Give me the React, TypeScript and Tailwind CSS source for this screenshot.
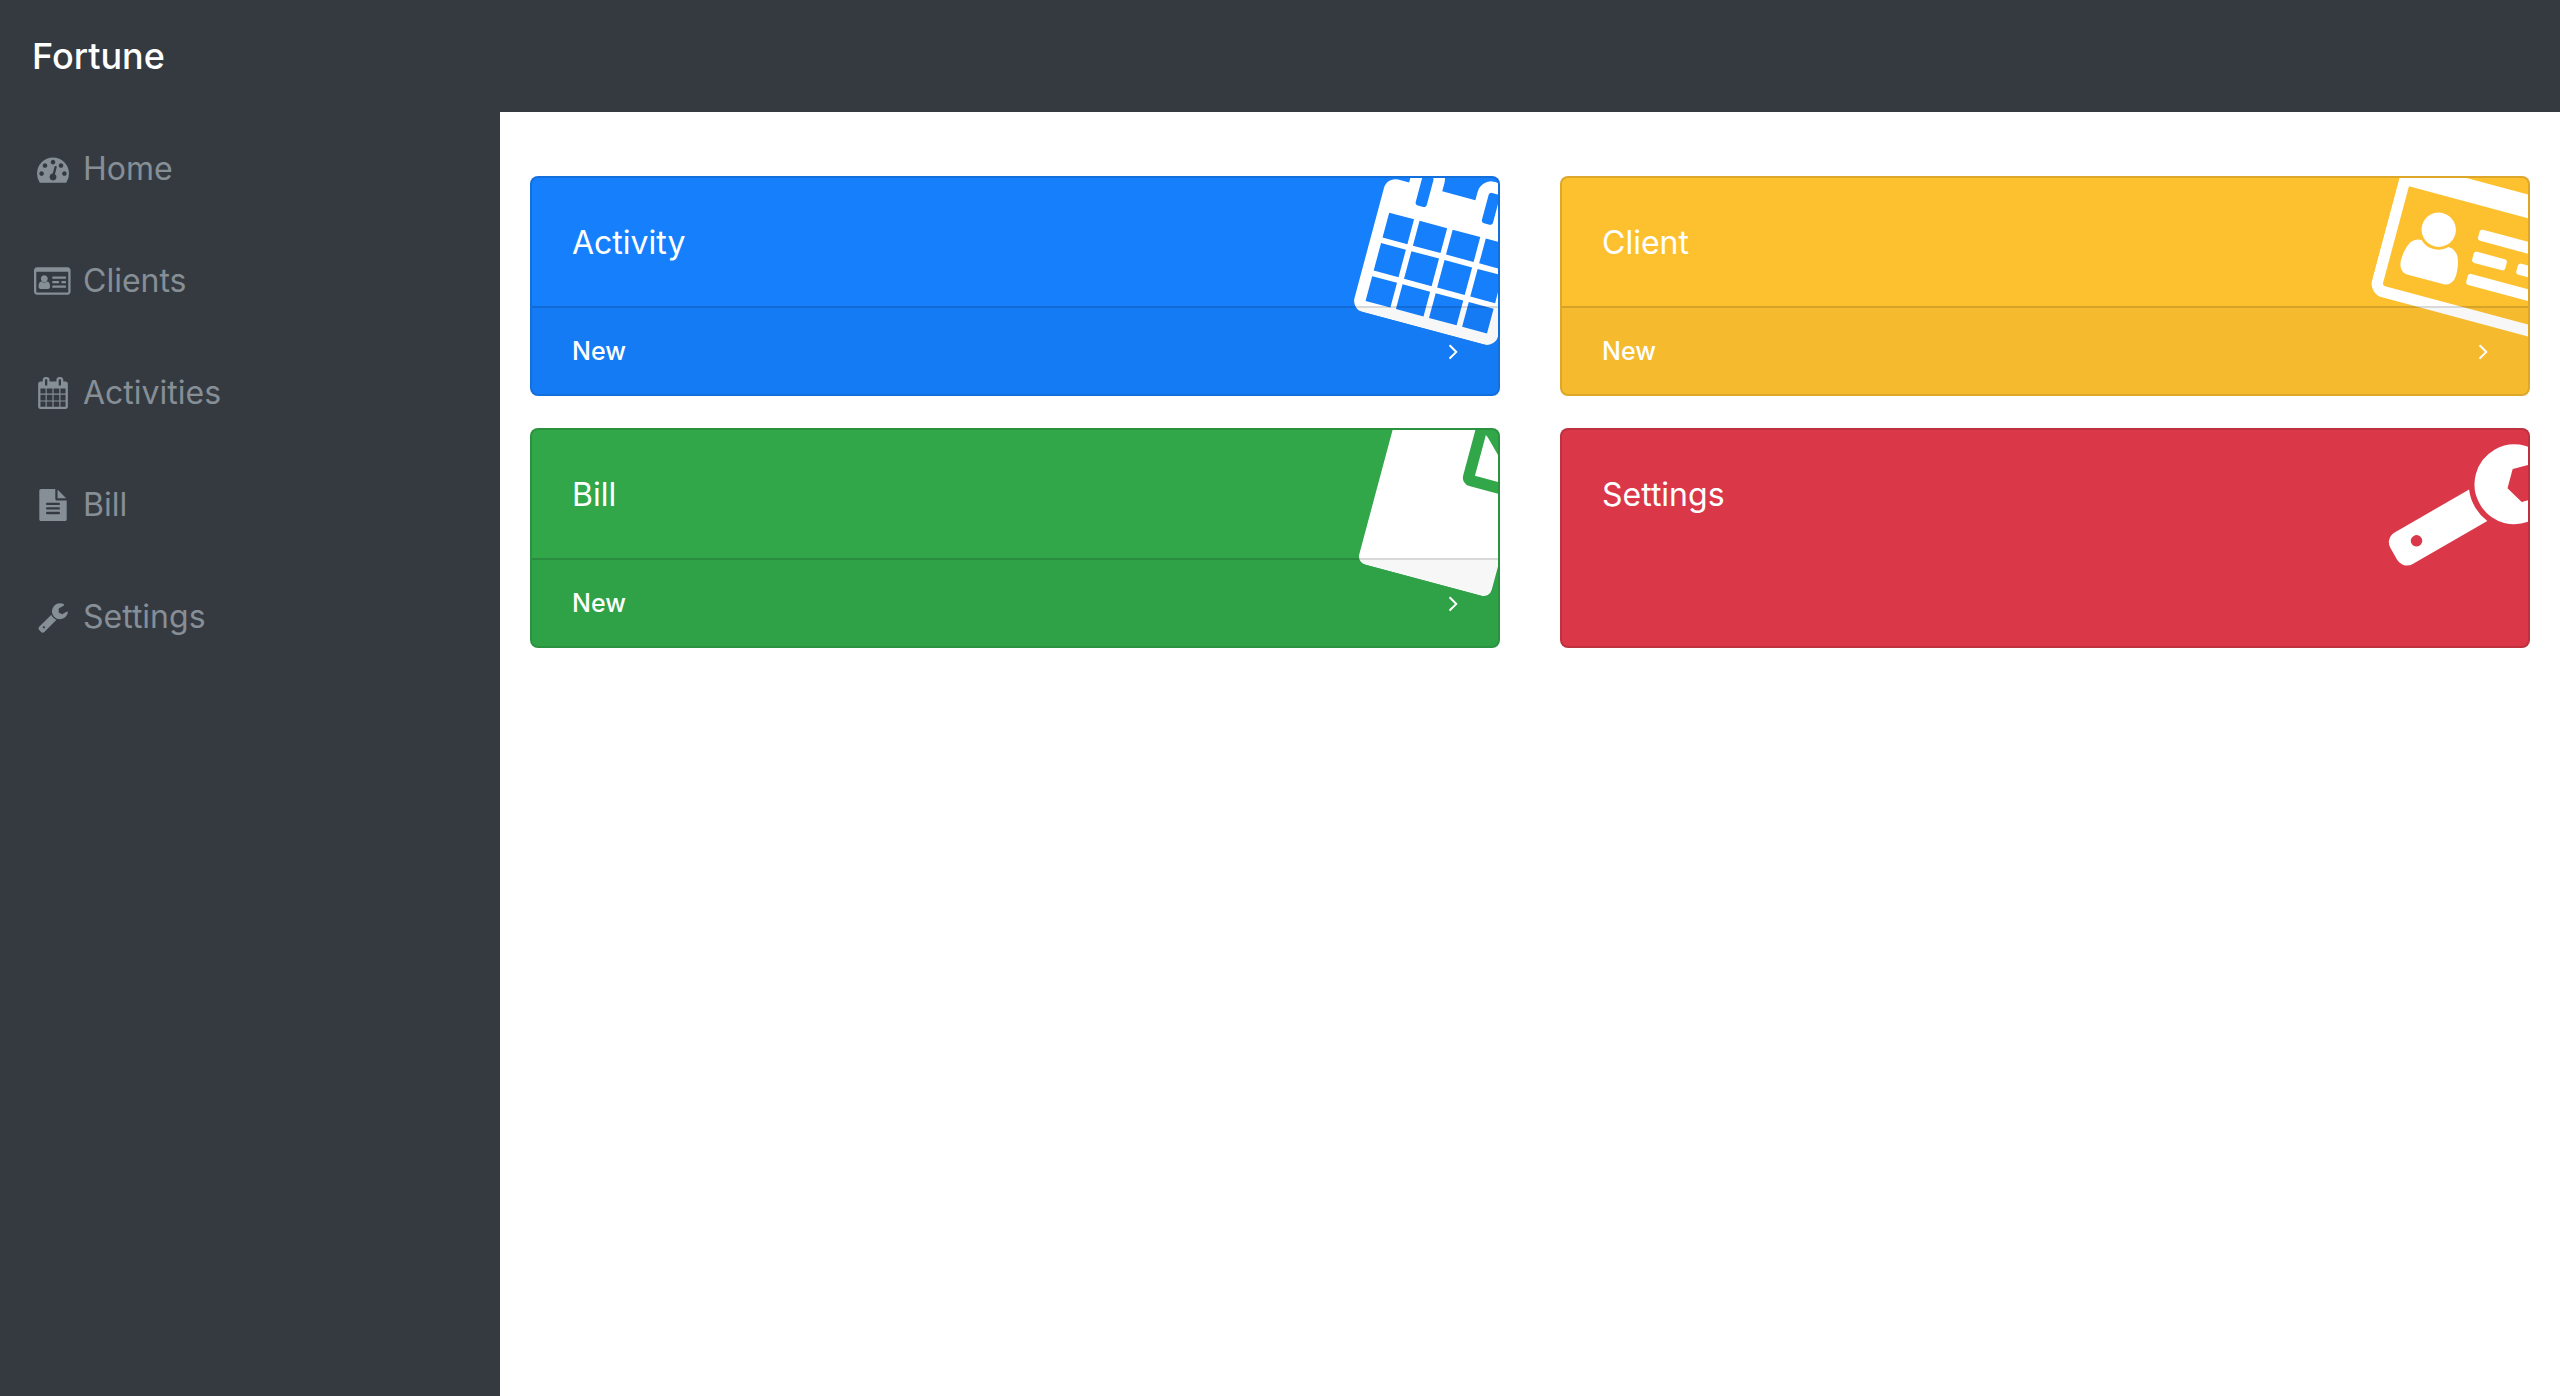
import type { ReactNode } from "react";

type IconProps = { className?: string };

function Glyph({ className, width = 1792, children }: IconProps & { width?: number; children: ReactNode }) {
  return (
    <svg className={className} viewBox={`0 0 ${width} 1792`} fill="currentColor" aria-hidden="true">
      {children}
    </svg>
  );
}

const GaugeIcon = ({ className }: IconProps) => (
  <Glyph className={className}>
    <path d="M384 1152q0-53-37.500-90.500t-90.500-37.500-90.500 37.500-37.500 90.500 37.500 90.500 90.500 37.500 90.500-37.500 37.500-90.500zm192-448q0-53-37.500-90.500t-90.500-37.500-90.500 37.500-37.500 90.500 37.500 90.500 90.500 37.500 90.500-37.500 37.500-90.500zm428 481l101-382q6-26-7.500-48.500t-38.500-29.500-48 6.500-30 39.500l-101 382q-60 5-107 43.500t-63 98.500q-20 77 20 146t117 89 146-20 89-117q16-60-6-117t-72-91zm660-33q0-53-37.500-90.500t-90.500-37.500-90.500 37.500-37.500 90.500 37.500 90.500 90.500 37.500 90.500-37.500 37.500-90.500zm-640-640q0-53-37.500-90.500t-90.500-37.500-90.500 37.500-37.500 90.500 37.500 90.500 90.500 37.500 90.500-37.500 37.500-90.500zm448 192q0-53-37.500-90.500t-90.500-37.500-90.500 37.500-37.500 90.500 37.500 90.500 90.500 37.500 90.500-37.500 37.500-90.500zm320 448q0 261-141 483-19 29-54 29h-1402q-35 0-54-29-141-221-141-483 0-182 71-348t191-286 286-191 348-71 348 71 286 191 191 286 71 348z" />
  </Glyph>
);

const IdCardIcon = ({ className }: IconProps) => (
  <Glyph className={className} width={2048}>
    <path
      transform="translate(0 1536) scale(1 -1)"
      d="M896 324q0 54 -7.5 100.5t-24.5 90t-51 68.500t-81 25q-64 -64 -156 -64t-156 64q-47 0 -81 -25t-51 -68.500t-24.500 -90t-7.500 -100.500q0 -55 31.500 -93.500t75.500 -38.500h426q44 0 75.500 38.500t31.500 93.500zM768 768q0 80 -56 136t-136 56t-136 -56t-56 -136t56 -136t136 -56t136 56t56 136zM1792 288v64q0 14 -9 23t-23 9h-704q-14 0 -23 -9t-9 -23v-64q0 -14 9 -23t23 -9h704q14 0 23 9t9 23zM1408 544v64q0 14 -9 23t-23 9h-320q-14 0 -23 -9t-9 -23v-64q0 -14 9 -23t23 -9h320q14 0 23 9t9 23zM1792 544v64q0 14 -9 23t-23 9h-192q-14 0 -23 -9t-9 -23v-64q0 -14 9 -23t23 -9h192q14 0 23 9t9 23zM1792 800v64q0 14 -9 23t-23 9h-704q-14 0 -23 -9t-9 -23v-64q0 -14 9 -23t23 -9h704q14 0 23 9t9 23z"
    />
    <path
      transform="translate(0 1536) scale(1 -1)"
      fillRule="evenodd"
      d="M1920 32v1120h-1792v-1120q0 -13 9.500 -22.500t22.500 -9.500h1728q13 0 22.500 9.500t9.500 22.500zM2048 1248v-1216q0 -66 -47 -113t-113 -47h-1728q-66 0 -113 47t-47 113v1216q0 66 47 113t113 47h1728q66 0 113 -47t47 -113z"
    />
  </Glyph>
);

const CalendarIcon = ({ className }: IconProps) => (
  <Glyph className={className}>
    <path d="M192 1664h288v-288h-288v288zm352 0h320v-288h-320v288zm-352-352h288v-320h-288v320zm352 0h320v-320h-320v320zm-352-384h288v-288h-288v288zm736 736h320v-288h-320v288zm-384-736h320v-288h-320v288zm768 736h288v-288h-288v288zm-384-352h320v-320h-320v320zm-352-864v-288q0-13-9.500-22.500t-22.500-9.500h-64q-13 0-22.500 9.500t-9.500 22.500v288q0 13 9.500 22.500t22.500 9.500h64q13 0 22.500-9.500t9.500-22.500zm736 864h288v-320h-288v320zm-384-384h320v-288h-320v288zm384 0h288v-288h-288v288zm32-480v-288q0-13-9.500-22.500t-22.500-9.500h-64q-13 0-22.500 9.500t-9.500 22.500v288q0 13 9.500 22.500t22.500 9.500h64q13 0 22.500-9.500t9.500-22.500zm384-64v1280q0 52-38 90t-90 38h-1408q-52 0-90-38t-38-90v-1280q0-52 38-90t90-38h128v-96q0-66 47-113t113-47h64q66 0 113 47t47 113v96h384v-96q0-66 47-113t113-47h64q66 0 113 47t47 113v96h128q52 0 90 38t38 90z" />
  </Glyph>
);

const FileTextIcon = ({ className }: IconProps) => (
  <Glyph className={className}>
    <path d="M1596 476q14 14 28 36h-472v-472q22 14 36 28zm-476 164h544v1056q0 40-28 68t-68 28h-1344q-40 0-68-28t-28-68v-1600q0-40 28-68t68-28h800v544q0 40 28 68t68 28zm160 736v-64q0-14-9-23t-23-9h-704q-14 0-23 9t-9 23v64q0 14 9 23t23 9h704q14 0 23-9t9-23zm0-256v-64q0-14-9-23t-23-9h-704q-14 0-23 9t-9 23v64q0 14 9 23t23 9h704q14 0 23-9t9-23zm0-256v-64q0-14-9-23t-23-9h-704q-14 0-23 9t-9 23v64q0 14 9 23t23 9h704q14 0 23-9t9-23z" />
  </Glyph>
);

const FileIcon = ({ className }: IconProps) => (
  <Glyph className={className}>
    <path d="M1152 512v-472q22 14 36 28l408 408q14 14 28 36h-472zm-128 32q0 40 28 68t68 28h544v1056q0 40-28 68t-68 28h-1344q-40 0-68-28t-28-68v-1600q0-40 28-68t68-28h800v544z" />
  </Glyph>
);

const WrenchIcon = ({ className }: IconProps) => (
  <Glyph className={className}>
    <path d="M448 1472q0-26-19-45t-45-19-45 19-19 45 19 45 45 19 45-19 19-45zm644-420l-682 682q-37 37-90 37-52 0-91-37l-106-108q-38-36-38-90 0-53 38-91l681-681q39 98 114.500 173.500t173.500 114.500zm634-435q0 39-23 106-47 134-164.500 217.500t-258.500 83.500q-185 0-316.500-131.500t-131.500-316.500 131.500-316.500 316.500-131.500q58 0 121.500 16.500t107.500 46.500q16 11 16 28t-16 28l-293 169v224l193 107q5-3 79-48.500t135.500-81 70.500-35.500q15 0 23.500 10t8.500 25z" />
  </Glyph>
);

const AngleRightIcon = ({ className }: IconProps) => (
  <svg className={className} viewBox="588 0 608 1792" fill="currentColor" aria-hidden="true">
    <path d="M1171 960q0 13-10 23l-466 466q-10 10-23 10t-23-10l-50-50q-10-10-10-23t10-23l393-393-393-393q-10-10-10-23t10-23l50-50q10-10 23-10t23 10l466 466q10 10 10 23z" />
  </svg>
);

const navItems = [
  { label: "Home", Icon: GaugeIcon },
  { label: "Clients", Icon: IdCardIcon },
  { label: "Activities", Icon: CalendarIcon },
  { label: "Bill", Icon: FileTextIcon },
  { label: "Settings", Icon: WrenchIcon },
];

const cards = [
  { title: "Activity", color: "bg-[#167ffc]", Icon: CalendarIcon, action: "New" },
  { title: "Client", color: "bg-[#fdc130]", Icon: IdCardIcon, action: "New" },
  { title: "Bill", color: "bg-[#31a74a]", Icon: FileIcon, action: "New" },
  { title: "Settings", color: "bg-[#da3849]", Icon: WrenchIcon, action: null },
];

export default function App() {
  return (
    <div className="flex min-h-screen flex-col bg-[#353a41] font-[Inter,sans-serif] text-[32px] leading-[48px]">
      <header className="flex h-28 items-center px-8">
        <a href="#" className="text-[36px] leading-[60px] font-medium text-white">
          Fortune
        </a>
      </header>
      <div className="flex flex-1">
        <nav className="w-[500px] shrink-0" aria-label="Main">
          <ul>
            {navItems.map(({ label, Icon }) => (
              <li key={label}>
                <a href="#" className="flex items-center gap-[10px] px-8 pt-[33px] pb-[31px] text-[#868e96]">
                  <span className="flex w-[41px] shrink-0 justify-center">
                    <Icon className="h-8 w-auto shrink-0" />
                  </span>
                  {label}
                </a>
              </li>
            ))}
          </ul>
        </nav>
        <main className="flex-1 bg-white px-[30px] py-16">
          <div className="grid grid-cols-2 gap-x-[60px] gap-y-8">
            {cards.map(({ title, color, Icon, action }) => (
              <section
                key={title}
                className={`relative flex flex-col overflow-hidden rounded-lg border-2 border-black/[.125] text-white ${color}`}
              >
                <div className="absolute -top-[7px] -right-[50px] flex w-52 rotate-[15deg] justify-center">
                  <Icon className="h-40 w-auto shrink-0" />
                </div>
                <h2 className="relative px-10 pt-[41px] pb-[39px]">{title}</h2>
                {action && (
                  <a
                    href="#"
                    className="relative flex items-center justify-between border-t-2 border-black/[.125] bg-black/[.03] px-10 py-6 text-[25px] leading-[38px] font-medium"
                  >
                    {action}
                    <AngleRightIcon className="h-[26px] w-auto" />
                  </a>
                )}
              </section>
            ))}
          </div>
        </main>
      </div>
    </div>
  );
}
